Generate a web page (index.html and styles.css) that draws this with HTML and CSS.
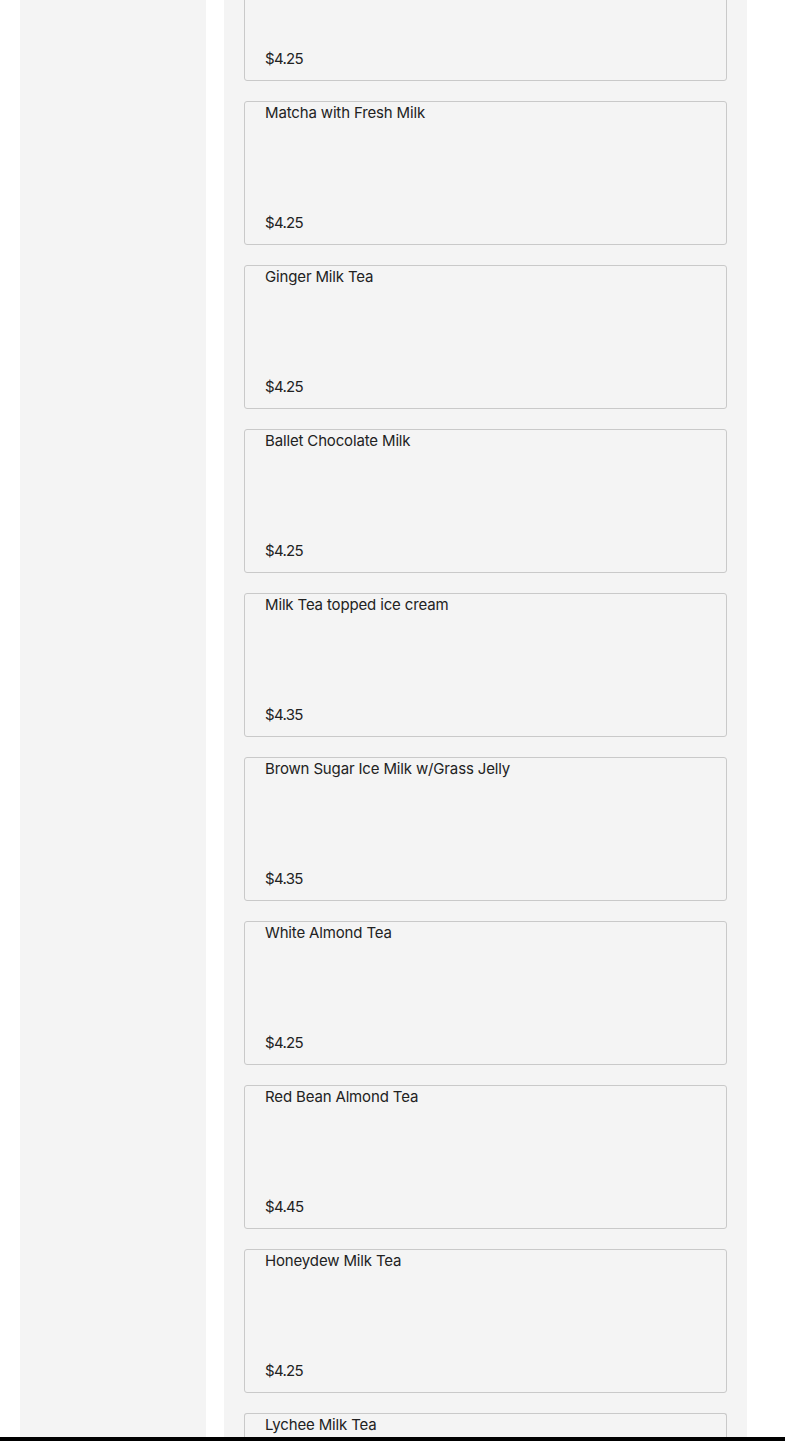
FILE: index.html
```html
<!DOCTYPE html>
<html><head><meta charset="utf-8"><link rel="stylesheet" href="styles.css"></head>
<body>
<div class="page">
  <aside class="sidebar"></aside>
  <main class="panel">
    <div class="list">
      <div class="card"><div class="name"></div><div class="price">$4.25</div></div>
      <div class="card"><div class="name">Matcha with Fresh Milk</div><div class="price">$4.25</div></div>
      <div class="card"><div class="name">Ginger Milk Tea</div><div class="price">$4.25</div></div>
      <div class="card"><div class="name">Ballet Chocolate Milk</div><div class="price">$4.25</div></div>
      <div class="card"><div class="name">Milk Tea topped ice cream</div><div class="price">$4.35</div></div>
      <div class="card"><div class="name">Brown Sugar Ice Milk w/Grass Jelly</div><div class="price">$4.35</div></div>
      <div class="card"><div class="name">White Almond Tea</div><div class="price">$4.25</div></div>
      <div class="card"><div class="name">Red Bean Almond Tea</div><div class="price">$4.45</div></div>
      <div class="card"><div class="name">Honeydew Milk Tea</div><div class="price">$4.25</div></div>
      <div class="card last"><div class="name">Lychee Milk Tea</div></div>
    </div>
  </main>
</div>
<div class="bottombar"></div>
</body></html>
```
FILE: styles.css
```css
html,body{margin:0;padding:0;background:#fff;overflow:hidden;height:1441px}
body{font-family:Inter,"Liberation Sans",sans-serif;font-size:15px;color:#222}
.page{display:flex;gap:18px;padding-left:20px;height:1437px;overflow:hidden}
.sidebar{width:186px;background:#f4f4f4;flex:none}
.panel{width:523px;background:#f4f4f4;flex:none;padding:0 20px;box-sizing:border-box;overflow:hidden}
.list{display:flex;flex-direction:column;gap:20px;margin-top:-63px}
.card{height:144px;box-sizing:border-box;border:1px solid #c9c9c9;border-radius:3px;background:#f4f4f4;padding:2px 20px 12px;display:flex;flex-direction:column;justify-content:space-between;flex:none}
.card.last{height:24px;border-bottom:none;border-radius:3px 3px 0 0;padding-bottom:0}
.name{line-height:18px;letter-spacing:-0.15px;min-height:18px}
.price{line-height:18px;letter-spacing:-0.7px}
.bottombar{height:4px;background:#000}
```
